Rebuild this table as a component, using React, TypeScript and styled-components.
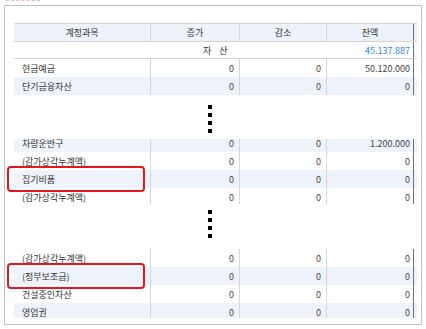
import styled, { createGlobalStyle } from "styled-components";

const GlobalStyle = createGlobalStyle`
  body {
    margin: 0;
    background: #fff;
    font-family: "Noto Sans CJK KR", "Noto Sans", sans-serif;
  }
`

const Page = styled.div`
  width: 426px;
  height: 329px;
  overflow: hidden;
`

const TopMark = styled.div`
  margin-left: 6px;
  width: 34px;
  border-top: 1px dashed #f6b8b8;
`

const Frame = styled.div`
  margin: 4px 0 0 4px;
  width: 418px;
  height: 320px;
  box-sizing: border-box;
  border: 1px solid #c2c2c2;
  padding: 17px 0 0 9px;
`

const Grid = styled.div`
  display: grid;
  grid-template-columns: 137px 89px 87px 87px 3px;
  width: 403px;
  font-size: 9px;
  color: #333;
`

const HeaderRow = styled(Grid)`
  height: 19px;
  box-sizing: border-box;
  background: #edf2fa;
  border-top: 1px solid #d3d3d3;
  border-bottom: 1px solid #d3d3d3;
`

const HeaderCell = styled.div<{ $last?: boolean }>`
  display: flex;
  align-items: center;
  justify-content: center;
  border-right: 1px solid ${p => (p.$last ? "#707070" : "#d6d6d6")};
`

const TotalRow = styled(Grid)`
  height: 16px;
  border-bottom: 1px solid #d3d3d3;
`

const TotalLabel = styled.div`
  grid-column: span 3;
  display: flex;
  align-items: center;
  padding-left: 189px;
  word-spacing: 6px;
`

const TotalValue = styled.div`
  display: flex;
  align-items: center;
  justify-content: flex-end;
  padding-right: 3px;
  color: #2f86e0;
  border-right: 1px solid #707070;
`

const Row = styled(Grid)<{ $striped?: boolean }>`
  height: 18px;
  background: ${p => (p.$striped ? "#eef3fb" : "#fff")};
`

const LabelCell = styled.div`
  position: relative;
  display: flex;
  align-items: center;
  padding-left: 8px;
  border-right: 1px solid #d6d6d6;
  white-space: nowrap;
`

const NumCell = styled.div<{ $last?: boolean }>`
  display: flex;
  align-items: center;
  justify-content: flex-end;
  padding-right: ${p => (p.$last ? "3px" : "5px")};
  color: #444;
  border-right: 1px solid ${p => (p.$last ? "#707070" : "#d6d6d6")};
`

const Highlight = styled.div`
  position: absolute;
  top: -4px;
  bottom: -4px;
  left: -7px;
  right: 5px;
  border: 2px solid #e5161d;
  border-radius: 4px;
`

const Block = styled.div<{ $height: number; $offset?: number }>`
  display: flow-root;
  height: ${p => p.$height}px;
  overflow-x: visible;
  overflow-y: clip;
  & > :first-child {
    margin-top: ${p => -(p.$offset ?? 0)}px;
  }
`

const Dots = styled.div<{ $top: number; $bottom: number }>`
  display: flex;
  flex-direction: column;
  gap: 4px;
  padding: ${p => p.$top}px 0 ${p => p.$bottom}px 194px;
`

const Dot = styled.span`
  width: 4px;
  height: 4px;
  background: #000;
`

type Item = { label: string; inc: string; dec: string; bal: string; striped?: boolean; marked?: boolean }

const first: Item[] = [
  { label: "현금예금", inc: "0", dec: "0", bal: "50.120.000" },
  { label: "단기금융자산", inc: "0", dec: "0", bal: "0", striped: true },
]

const second: Item[] = [
  { label: "차량운반구", inc: "0", dec: "0", bal: "1.200.000", striped: true },
  { label: "(감가상각누계액)", inc: "0", dec: "0", bal: "0" },
  { label: "집기비품", inc: "0", dec: "0", bal: "0", striped: true, marked: true },
  { label: "(감가상각누계액)", inc: "0", dec: "0", bal: "0" },
]

const third: Item[] = [
  { label: "(감가상각누계액)", inc: "0", dec: "0", bal: "0" },
  { label: "(정부보조금)", inc: "0", dec: "0", bal: "0", striped: true, marked: true },
  { label: "건설중인자산", inc: "0", dec: "0", bal: "0" },
  { label: "영업권", inc: "0", dec: "0", bal: "0", striped: true },
]

const Rows = ({ items }: { items: Item[] }) => (
  <>
    {items.map((r, i) => (
      <Row key={i} $striped={r.striped}>
        <LabelCell>
          {r.label}
          {r.marked && <Highlight />}
        </LabelCell>
        <NumCell>{r.inc}</NumCell>
        <NumCell>{r.dec}</NumCell>
        <NumCell $last>{r.bal}</NumCell>
        <div />
      </Row>
    ))}
  </>
)

const Ellipsis = ({ top, bottom }: { top: number; bottom: number }) => (
  <Dots $top={top} $bottom={bottom}>
    <Dot />
    <Dot />
    <Dot />
    <Dot />
  </Dots>
)

export default function App() {
  return (
    <Page>
      <GlobalStyle />
      <TopMark />
      <Frame>
        <HeaderRow>
          <HeaderCell>계정과목</HeaderCell>
          <HeaderCell>증가</HeaderCell>
          <HeaderCell>감소</HeaderCell>
          <HeaderCell $last>잔액</HeaderCell>
          <div />
        </HeaderRow>
        <TotalRow>
          <TotalLabel>자 산</TotalLabel>
          <TotalValue>45.137.887</TotalValue>
          <div />
        </TotalRow>
        <Rows items={first} />
        <Ellipsis top={10} bottom={6} />
        <Block $height={65} $offset={5}>
          <Rows items={second} />
        </Block>
        <Ellipsis top={6} bottom={11} />
        <Block $height={69}>
          <Rows items={third} />
        </Block>
      </Frame>
    </Page>
  )
}
